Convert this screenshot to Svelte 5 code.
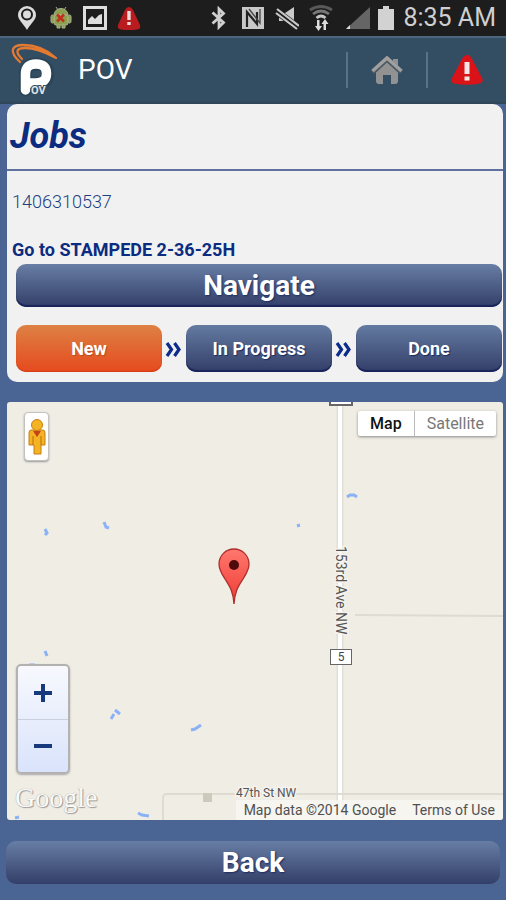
<script>
  const steps = ['New', 'In Progress', 'Done'];
  let current = $state('New');
  let mapType = $state('Map');
</script>

<div class="screen">
  <div class="status">
    <div class="tray">
      <svg width="24" height="24" viewBox="0 0 24 24"><path fill="#dcdcdc" fill-rule="evenodd" d="M12 0a9 9 0 0 0-9 9c0 5 5 8 9 15 4-7 9-10 9-15a9 9 0 0 0-9-9zm0 2.500a6 6 0 1 1 0 12 6 6 0 0 1 0-12z"/><circle cx="12" cy="8.500" r="4" fill="#dcdcdc"/></svg>
      <svg width="24" height="24" viewBox="0 0 24 24"><g fill="#8ca04f" stroke="#a9b18c" stroke-width="1"><path d="M5 9a7 6.500 0 0 1 14 0z"/><rect x="5" y="9" width="14" height="10" rx="2"/><rect x="2" y="9" width="3" height="8" rx="1.500"/><rect x="19" y="9" width="3" height="8" rx="1.500"/><path d="M8 19v3h3v-3M13 19v3h3v-3M7 1l2 3M17 1l-2 3"/></g><path d="M8 8.500l7 7M15 8.500l-7 7" stroke="#c42d1c" stroke-width="2.500"/></svg>
      <svg width="24" height="24" viewBox="0 0 24 24"><rect x="1.500" y="1.500" width="21" height="21" fill="none" stroke="#dedede" stroke-width="3"/><path fill="#dedede" d="M5 18v-4l4-4 3 3 4-4 3-1v10z"/></svg>
      <svg width="24" height="24" viewBox="0 0 24 24"><path fill="#b91c1f" d="M12 1q2.500 0 4 3l7 15q1 4-3 4.500-8 1-16 0-4-.5-3-4.500L8 4q1.500-3 4-3z"/><path fill="#eadada" d="M10.300 5h3.400v9h-3.400zM10.300 16h3.400v3h-3.400z"/></svg>
    </div>
    <div class="tray right">
      <svg width="24" height="24" viewBox="0 0 24 24"><path d="M5.500 6.500l11 10-4.500 4.500V3l4.500 4.500-11 10" fill="none" stroke="#d0d0d0" stroke-width="2.800"/></svg>
      <svg width="24" height="24" viewBox="0 0 24 24"><path fill="#c8c8c8" d="M1 1h22v22H1z"/><path d="M6 21V6l10 12V6" fill="none" stroke="#222" stroke-width="2.200"/><path d="M8 3l11 14V3" fill="none" stroke="#444" stroke-width="1.300"/></svg>
      <svg width="24" height="24" viewBox="0 0 24 24"><path fill="#cacaca" d="M4 7h6l9-6v20l-9-6H4z"/><path d="M0 4l24 18" stroke="#1d1d1d" stroke-width="7"/><path d="M2 3l22 17M1 7l21 16" stroke="#c8c8c8" stroke-width="2.200"/></svg>
      <svg width="24" height="26" viewBox="0 0 24 26"><g fill="none" stroke-width="2.800"><path d="M1 5q11-7 22 0" stroke="#585858"/><path d="M4 9q8-6 16 0" stroke="#777"/><path d="M7.500 13q4.500-4 9 0" stroke="#c5c5c5"/></g><path fill="#ddd" d="M8 15h2.500v6H13l-3.500 5L6 21h2zM14.500 25H17v-6h2.500L16 14l-3.500 5h2z"/></svg>
      <svg width="28" height="24" viewBox="0 0 28 24"><path fill="#656565" d="M27 1v22H3z"/><path fill="#ddd" d="M7 19v4H3z"/></svg>
      <svg class="battery" width="18" height="24" viewBox="0 0 18 24"><path fill="#d2d2d2" d="M6 0h6v3h5v21H1V3h5z"/></svg>
      <time>8:35 AM</time>
    </div>
  </div>

  <header>
    <svg class="logo" width="48" height="54" viewBox="0 0 48 54">
      <path d="M15.500 47V31q0-10 11-10t11 10-11 9h-6" fill="none" stroke="#22394a" stroke-opacity=".45" stroke-width="13" stroke-linecap="round"/>
      <path d="M15.500 47V31q0-10 10.500-10t10.500 9.500-10.500 9.500h-5" fill="none" stroke="#fff" stroke-width="9.500" stroke-linecap="round"/>
      <path d="M10 19C-1 9 1 2 13 2c12 0 24 5 33 13M12 16C5 9 6 5 15 5c10 0 20 4 29 9" fill="none" stroke="#e47a30" stroke-width="2.300" stroke-linecap="round"/>
      <text x="21" y="51" font-size="11" font-weight="700" fill="#dfe5ea" stroke="#334d63" stroke-width="2" paint-order="stroke">OV</text>
    </svg>
    <h1>POV</h1>
    <button class="tool" aria-label="Home">
      <svg width="32" height="28" viewBox="0 0 32 28"><path fill="#929292" d="M22 3h5v7h-5zM5 16L16 6l11 10v9q0 3-3 3h-4v-9h-8v9H8q-3 0-3-3z"/><path d="M1.500 16.500L16 3l14.500 13.500" fill="none" stroke="#4d5962" stroke-width="5"/><path d="M1.500 15L16 2l14.500 13" fill="none" stroke="#a0a0a0" stroke-width="3.500"/></svg>
    </button>
    <button class="tool" aria-label="Alerts">
      <svg width="32" height="30" viewBox="0 0 32 30"><path fill="#da1318" d="M16 0q3 0 5 4l10 19q2 4-2 5.500-13 2.500-26 0-4-1.500-2-5.500L11 4q2-4 5-4z"/><path fill="#f7e6e6" d="M13.500 7h5v12h-5zM13.500 21.500h5v4h-5z"/></svg>
    </button>
  </header>

  <main>
    <section class="card">
      <h2>Jobs</h2>
      <div class="details">
        <p class="number">1406310537</p>
        <p class="task">Go to STAMPEDE 2-36-25H</p>
        <button class="bar">Navigate</button>
        <div class="steps">
          {#each steps as step, i}
            {#if i > 0}
              <svg class="chevrons" width="24" height="16" viewBox="0 0 24 16"><path d="M5 2l4.500 6.500L5 15M12.500 2L17 8.500 12.500 15" fill="none" stroke="#0c2c8c" stroke-width="3.200"/></svg>
            {/if}
            <button class="step" class:active={current === step} onclick={() => (current = step)}>{step}</button>
          {/each}
        </div>
      </div>
    </section>

    <section class="map" aria-label="Job location">
      <svg class="tiles" viewBox="0 0 496 418" preserveAspectRatio="xMidYMid slice">
        <g fill="none">
          <path d="M333 0V418" stroke="#e2dfd7" stroke-width="7"/>
          <path d="M333 0V418" stroke="#fff" stroke-width="4"/>
          <path d="M348 213L496 214M156 418V396q0-4 4-4H496" stroke="#dedbd2" stroke-width="2"/>
        </g>
        <path fill="#ccc9bd" d="M196 391h9v9h-9z"/>
        <g fill="none" stroke="#8bb2f6" stroke-width="3">
          <path d="M340 95l3-2h4l3 2M290 124l3-1M38 127l2 4-2 2M97 120l2 5 3 1M38 249l2 5M108 308l5 4M104 317l3-5M184 328l4-1 6-4M131 411l4 2 7 1M22 263l6 0M8 416l4-1"/>
        </g>
        <g font-size="12" fill="#555" stroke="#f5f3ed" stroke-width="3" paint-order="stroke">
          <text x="229" y="395">47th St NW</text>
          <text transform="translate(329 144) rotate(90)" font-size="14">153rd Ave NW</text>
        </g>
        <rect x="323.500" y="247.500" width="21" height="15" fill="#fff" stroke="#666"/>
        <text x="334" y="259" font-size="12" text-anchor="middle" fill="#444">5</text>
        <path d="M323 0v3h22v-3" fill="#fff" stroke="#666" stroke-width="2"/>
        <defs><linearGradient id="pin" x2="0" y2="1"><stop stop-color="#ff786f"/><stop offset="1" stop-color="#ee3a32"/></linearGradient></defs>
        <path d="M227 202c-1-13-4-17-9-25-3-5-6-9-6-15a15 15 0 0 1 30 0c0 6-3 10-6 15-5 8-8 12-9 25z" fill="url(#pin)" stroke="#ad2f2d" stroke-width="1.300"/>
        <circle cx="227" cy="163" r="5" fill="#4f0b0b"/>
      </svg>

      <button class="pegman" aria-label="Street View">
        <svg width="18" height="38" viewBox="0 0 18 38"><g fill="#f3b322" stroke="#c77f16" stroke-width="1"><path d="M3 12h12q2 0 2 3v12h-4v9H6v-9H1V15q0-3 2-3z"/><circle cx="9" cy="7" r="5.500"/></g><path d="M5 13l4 6 4-6z" fill="#c8401c"/><path d="M5 18v9M13 18v9" stroke="#bf6c15"/></svg>
      </button>
      <div class="types">
        {#each ['Map', 'Satellite'] as type}
          <button class:chosen={mapType === type} onclick={() => (mapType = type)}>{type}</button>
        {/each}
      </div>
      <div class="zoom">
        <button aria-label="Zoom in"><svg width="20" height="20" viewBox="0 0 20 20"><path d="M1 10h18M10 1v18" stroke="#173a7d" stroke-width="4"/></svg></button>
        <button aria-label="Zoom out"><svg width="20" height="20" viewBox="0 0 20 20"><path d="M1 10h18" stroke="#173a7d" stroke-width="4"/></svg></button>
      </div>
      <span class="google">Google</span>
      <div class="credits"><span>Map data ©2014 Google</span><a href="#terms">Terms of Use</a></div>
    </section>

    <button class="bar back">Back</button>
  </main>
</div>

<style>
  :global(body) { margin: 0; background: #4a6594; }
  .screen { min-height: 100vh; background: #4a6594; font-family: Roboto, "Liberation Sans", sans-serif; }
  button { font-family: inherit; border: 0; padding: 0; margin: 0; cursor: pointer; }
  svg { display: block; flex: none; }
  h1, h2, p { margin: 0; }

  .status { display: flex; justify-content: space-between; align-items: center; box-sizing: border-box; height: 36px; padding: 0 10px 0 15px; background: #1d1d1d; }
  .tray { display: flex; align-items: center; gap: 10px; }
  .battery { margin-left: -4px; }
  time { margin-left: -2px; font-size: 25px; line-height: 36px; color: #cfcfcf; white-space: nowrap; }

  header { display: flex; align-items: center; box-sizing: border-box; height: 68px; padding-left: 10px; background: #334d63; border-top: 2px solid #4b667e; border-bottom: 2px solid #2f4759; }
  h1 { flex: 1; padding-left: 20px; font-size: 28px; line-height: 36px; font-weight: 400; color: #fff; }
  .tool { display: flex; align-items: center; justify-content: center; width: 80px; height: 36px; background: none; border-left: 2px solid #58728a; }

  main { padding: 0 3px 0 7px; }
  .card { background: #f1f1f1; border-radius: 10px; overflow: hidden; }
  h2 { padding: 10px 3px 11px; font-size: 36px; line-height: 44px; font-weight: 700; font-style: italic; color: #0b2c80; border-bottom: 2px solid #5f719f; }
  .details { padding: 19px 1px 10px 5px; }
  .number { font-size: 18px; line-height: 24px; font-weight: 300; color: #1d4180; }
  .task { padding: 24px 0 2px; font-size: 18px; line-height: 24px; font-weight: 700; color: #0b2c80; }
  .bar { display: block; width: 100%; height: 43px; border-radius: 10px; font-size: 28px; line-height: 40px; font-weight: 700; color: #fff; background: linear-gradient(#687ea5, #333f68); box-shadow: inset 0 -2px 1px #19245a; text-shadow: 1px 1px 2px #1c2b5c; }
  .details .bar { width: auto; min-width: calc(100% - 4px); margin-left: 4px; }
  .steps { display: flex; align-items: center; padding: 18px 0 0 4px; }
  .step { flex: 1; height: 47px; border-radius: 10px; font-size: 18px; font-weight: 700; color: #fff; background: linear-gradient(#647ba1, #333e69); box-shadow: inset 0 -2px 1px #19245a; text-shadow: 1px 1px 1px #1c2b5c; }
  .step.active { background: linear-gradient(#dd8145, #e64a1d); box-shadow: inset 0 -1px 1px #d33c18; text-shadow: 1px 1px 1px #b54a20; }

  .map { position: relative; height: 418px; margin: 20px 0 21px; overflow: hidden; background: #f0ede5; border-radius: 3px; }
  .tiles { width: 100%; height: 100%; }
  .pegman { position: absolute; left: 17px; top: 10px; display: flex; align-items: center; justify-content: center; width: 25px; height: 49px; background: #fff; border: 1px solid #c4c2bd; border-radius: 4px; box-shadow: 0 1px 2px #999; }
  .types { position: absolute; right: 7px; top: 9px; display: flex; background: #fff; box-shadow: 0 1px 3px #888; border-radius: 2px; }
  .types button { height: 25px; padding: 0 12px; font-size: 16px; color: #777; background: none; }
  .types button + button { border-left: 1px solid #bbb; }
  .types .chosen { color: #111; font-weight: 500; }
  .zoom { position: absolute; left: 9px; top: 262px; display: flex; flex-direction: column; width: 50px; border: 2px solid #b3b2b0; border-radius: 5px; overflow: hidden; background: linear-gradient(#f8f9fe, #d9e3fb); box-shadow: 0 1px 2px #aaa; }
  .zoom button { display: flex; align-items: center; justify-content: center; height: 53px; background: none; }
  .zoom button + button { border-top: 1px solid #ccd0dc; }
  .google { position: absolute; left: 8px; bottom: 4px; font-family: "Liberation Serif", serif; font-size: 28px; line-height: 36px; color: #fbfaf7; text-shadow: 1px 1px 1px #999, 0 0 1px #999; }
  .credits { position: absolute; right: 0; bottom: 0; display: flex; gap: 16px; padding: 0 8px; background: rgba(247, 246, 242, .85); font-size: 14px; line-height: 20px; color: #505050; }
  .credits a { color: inherit; text-decoration: none; }
  .back { width: calc(100% - 2px); margin-left: -1px; box-shadow: none; }
</style>
